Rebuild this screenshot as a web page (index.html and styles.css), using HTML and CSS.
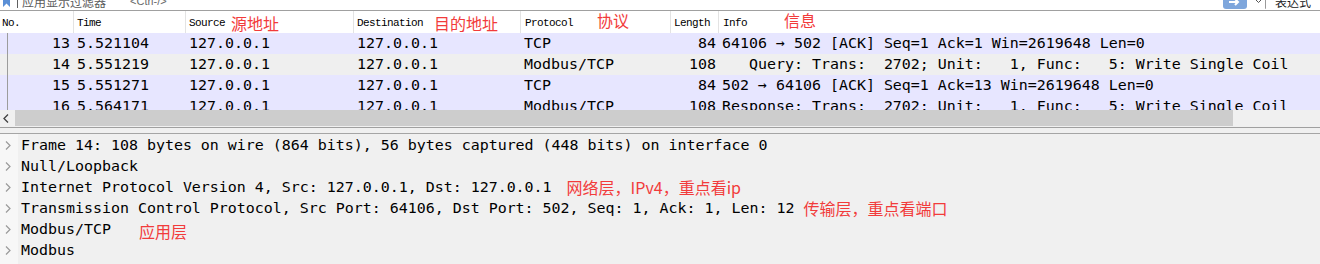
FILE: index.html
```html
<!DOCTYPE html>
<html lang="zh-CN">
<head>
<meta charset="utf-8">
<title>Wireshark</title>
<link rel="stylesheet" href="styles.css">
</head>
<body>
<div class="app">
  <div class="filterbar">
    <div class="filter-inner">
      <span class="bm-icon"><svg width="7" height="13" viewBox="0 0 7 13"><path d="M0 0H7V13L3.5 9.5L0 13Z" fill="#5b8fd6"/></svg></span>
      <span class="fsep"></span>
      <span class="placeholder">应用显示过滤器</span>
      <span class="placeholder-key">&lt;Ctrl-/&gt;</span>
      <span class="spacer"></span>
      <span class="apply-btn"><svg width="24" height="15" viewBox="0 0 24 15"><rect x="0" y="0" width="24" height="15" rx="3" fill="#7ea6dc"/><path d="M6 8H15M12 5L15 8L12 11" stroke="#fff" stroke-width="2" fill="none"/></svg></span>
      <span class="caret"><svg width="7" height="5" viewBox="0 0 7 5"><path d="M1 1L3.5 3.5L6 1" stroke="#555" stroke-width="1" fill="none"/></svg></span>
      <span class="input-end"></span>
      <span class="expr">表达式</span>
    </div>
  </div>

  <div class="plist">
    <div class="phead pgrid">
      <div class="hc hc-no">No.</div>
      <div class="hc">Time</div>
      <div class="hc">Source<span class="note note-h src-note">源地址</span></div>
      <div class="hc">Destination<span class="note note-h dst-note">目的地址</span></div>
      <div class="hc">Protocol<span class="note note-h up proto-note">协议</span></div>
      <div class="hc">Length</div>
      <div class="hc">Info<span class="note note-h up info-note">信息</span></div>
    </div>
    <div class="prows">
      <div class="prow pgrid tcp">
        <div class="c c-no">13</div><div class="c">5.521104</div><div class="c">127.0.0.1</div><div class="c">127.0.0.1</div><div class="c">TCP</div><div class="c c-len">84</div><div class="c c-info">64106 → 502 [ACK] Seq=1 Ack=1 Win=2619648 Len=0</div>
      </div>
      <div class="prow pgrid sel">
        <div class="c c-no">14</div><div class="c">5.551219</div><div class="c">127.0.0.1</div><div class="c">127.0.0.1</div><div class="c">Modbus/TCP</div><div class="c c-len">108</div><div class="c c-info">   Query: Trans:  2702; Unit:   1, Func:   5: Write Single Coil</div>
      </div>
      <div class="prow pgrid tcp">
        <div class="c c-no">15</div><div class="c">5.551271</div><div class="c">127.0.0.1</div><div class="c">127.0.0.1</div><div class="c">TCP</div><div class="c c-len">84</div><div class="c c-info">502 → 64106 [ACK] Seq=1 Ack=13 Win=2619648 Len=0</div>
      </div>
      <div class="prow pgrid tcp">
        <div class="c c-no">16</div><div class="c">5.564171</div><div class="c">127.0.0.1</div><div class="c">127.0.0.1</div><div class="c">Modbus/TCP</div><div class="c c-len">108</div><div class="c c-info">Response: Trans:  2702; Unit:   1, Func:   5: Write Single Coil</div>
      </div>
    </div>
    <div class="hscroll">
      <span class="sarrow"><svg width="6" height="9" viewBox="0 0 6 9"><path d="M5 0.5L1 4.5L5 8.5" stroke="#404040" stroke-width="1.3" fill="none"/></svg></span>
      <div class="thumb"></div>
    </div>
  </div>

  <div class="splitter"></div>

  <div class="details">
    <div class="dline"><span class="chev"></span><span class="dtext">Frame 14: 108 bytes on wire (864 bits), 56 bytes captured (448 bits) on interface 0</span></div>
    <div class="dline"><span class="chev"></span><span class="dtext">Null/Loopback</span></div>
    <div class="dline"><span class="chev"></span><span class="dtext">Internet Protocol Version 4, Src: 127.0.0.1, Dst: 127.0.0.1</span><span class="note ip-note">网络层，IPv4，重点看ip</span></div>
    <div class="dline"><span class="chev"></span><span class="dtext">Transmission Control Protocol, Src Port: 64106, Dst Port: 502, Seq: 1, Ack: 1, Len: 12</span><span class="note tcp-note">传输层，重点看端口</span></div>
    <div class="dline"><span class="chev"></span><span class="dtext">Modbus/TCP</span><span class="note app-note">应用层</span></div>
    <div class="dline"><span class="chev"></span><span class="dtext">Modbus</span></div>
  </div>
</div>
</body>
</html>
```

FILE: styles.css
```css
* { box-sizing: border-box; }
html, body { margin: 0; padding: 0; }
body {
  width: 1320px;
  height: 264px;
  overflow: hidden;
  background: #f0f0f0;
  font-family: "DejaVu Sans Mono", "Liberation Mono", monospace;
  color: #000;
}
.app { width: 1320px; }

/* filter bar (cut off at top) */
.filterbar {
  height: 11px;
  overflow: hidden;
  background: #fff;
  border-bottom: 1px solid #a0a0a0;
}
.filter-inner {
  height: 18px;
  margin-top: -8px;
  display: flex;
  align-items: center;
  font-family: "Noto Sans CJK SC", "Liberation Sans", sans-serif;
  font-size: 12px;
}
.bm-icon { margin-left: 3px; display: flex; align-items: center; }
.bm-icon svg { display: block; margin-top: -1px; }
.fsep { width: 1px; height: 14px; background: #606060; margin-left: 7px; }
.placeholder { margin-left: 4px; color: #5a5a5a; white-space: pre; }
.placeholder-key { margin-left: 24px; color: #6a6a6a; font-family: "Liberation Sans", sans-serif; font-size: 11px; }
.spacer { flex: 1; }
.apply-btn { display: flex; }
.apply-btn svg { display: block; }
.caret { margin-left: 8px; display: flex; }
.input-end { width: 1px; height: 16px; background: #9a9a9a; margin-left: 3px; border-radius: 0 0 2px 0; }
.expr { margin-left: 9px; margin-right: 9px; color: #202020; }

/* packet list */
.plist { background: #fff; }
.pgrid {
  display: grid;
  grid-template-columns: 73px 112px 168px 167px 150px 48px 1fr;
}
.phead {
  height: 22px;
  background: #fff;
  font-family: "Liberation Mono", monospace;
  font-size: 11px;
  letter-spacing: -0.6px;
  color: #000;
}
.hc {
  display: flex;
  align-items: center;
  padding-top: 2px;
  padding-left: 3px;
  border-left: 1px solid #e3e3e3;
  white-space: nowrap;
}
.hc-no { border-left: none; padding-left: 2px; }
.hc:nth-child(5), .hc:nth-child(7) { padding-left: 4px; }

.note {
  font-family: "Noto Sans CJK SC", "Liberation Sans", sans-serif;
  font-size: 16px;
  color: #f23b3b;
  letter-spacing: 0;
  white-space: pre;
}
.note-h { line-height: 17px; }
.up { margin-top: -5px; }
.src-note { margin-left: 6px; }
.dst-note { margin-left: 11px; }
.proto-note { margin-left: 24px; }
.info-note { margin-left: 37px; }

.prows {
  height: 77px;
  overflow: hidden;
  font-size: 14.95px;
  line-height: 21px;
}
.prow { height: 21px; white-space: pre; }
.prow.tcp { background: #e7e6ff; }
.prow.sel { background: #efefef; }
.c { padding-left: 4px; overflow: hidden; }
.c-no {
  text-align: right;
  padding-right: 3px;
  padding-left: 0;
  background: linear-gradient(#9c9c9c, #9c9c9c) 7px 0 / 1px 100% no-repeat;
}
.c-len { text-align: right; padding-right: 2px; padding-left: 0; overflow: visible; }
.c-info { overflow: visible; }

.hscroll {
  height: 16px;
  background: #f0f0f0;
  display: flex;
  align-items: stretch;
}
.sarrow { width: 15px; display: flex; align-items: center; padding-left: 3px; }
.sarrow svg { display: block; }
.thumb { width: 1218px; background: #cdcdcd; }

.splitter {
  margin-top: 1px;
  height: 7px;
  border-top: 1px solid #a0a0a0;
  border-bottom: 1px solid #a5a5a5;
  background: #f0f0f0;
}

/* details */
.details {
  padding-top: 1px;
  font-size: 14.95px;
  line-height: 21px;
  background: linear-gradient(#f7f7f7, #f7f7f7) 0 0 / 18px 100% no-repeat, #f0f0f0;
  height: 130px;
}
.dline { height: 21px; display: flex; align-items: center; white-space: pre; }
.chev {
  width: 21px;
  height: 21px;
  flex: none;
  background:
    url("data:image/svg+xml;utf8,<svg xmlns='http://www.w3.org/2000/svg' width='6' height='9'><path d='M1 0.5L5 4.5L1 8.5' stroke='%23999' stroke-width='1.2' fill='none'/></svg>") 5px 6px no-repeat;
}
.ip-note { margin-left: 15px; }
.tcp-note { margin-left: 9px; }
.app-note { margin-left: 28px; position: relative; top: 2px; }
```
